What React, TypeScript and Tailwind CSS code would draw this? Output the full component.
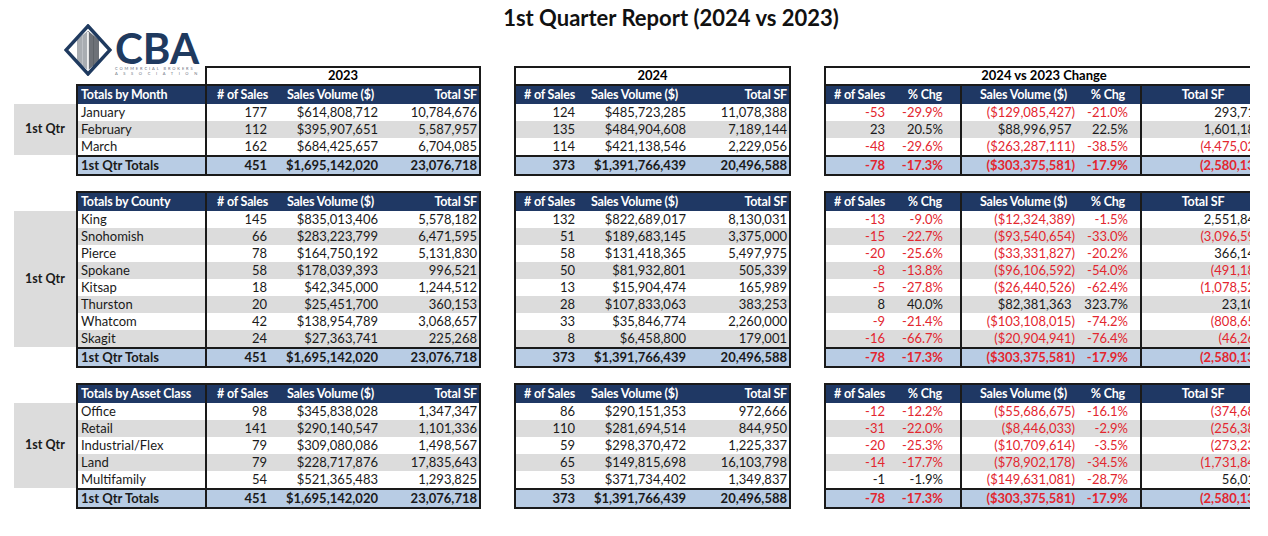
import React from "react";

type Col = { w: string; cls: string; head: string };

const leftCols: Col[] = [
  { w: "w-[129px] border-r-2 border-[#1a1a1a]", cls: "justify-start pl-[3px]", head: "justify-start pl-[3px]" },
  { w: "w-[65px]", cls: "justify-end pr-[5px]", head: "justify-end pr-[4px]" },
  { w: "w-[110px]", cls: "justify-end pr-[4px]", head: "justify-end pr-[8px]" },
  { w: "w-[97px]", cls: "justify-end pr-[2px]", head: "justify-end pr-[2px]" },
];

const midCols: Col[] = [
  { w: "w-[63px]", cls: "justify-end pr-[4px]", head: "justify-end pr-[4px]" },
  { w: "w-[111px]", cls: "justify-end pr-[4px]", head: "justify-center" },
  { w: "w-[99px]", cls: "justify-end pr-[2px]", head: "justify-end pr-[2px]" },
];

const chgCols: Col[] = [
  { w: "w-[63px]", cls: "justify-end pr-[4px]", head: "justify-end pr-[4px]" },
  { w: "w-[73px] border-r-2 border-[#1a1a1a]", cls: "justify-end pr-[17px]", head: "justify-end pr-[18px]" },
  { w: "w-[123px]", cls: "justify-end pr-[10px]", head: "justify-center" },
  { w: "w-[57px] border-r-2 border-[#1a1a1a]", cls: "justify-end pr-[12px]", head: "justify-end pr-[15px]" },
  { w: "w-[128px]", cls: "justify-end pr-[4px]", head: "justify-center pr-[6px]" },
];

type Cell = { t: string; red?: boolean; paren?: boolean };

const RED = "text-[#e3262f]";

function Table({ cols, head, rows, total, width }: { cols: Col[]; head: string[]; rows: Cell[][]; total: Cell[]; width: string }) {
  const renderCell = (c: Cell, i: number, base: string) => (
    <div key={i} className={`${cols[i].w} ${base} h-full flex items-center whitespace-nowrap ${c.red ? RED : ""}`}>
      {c.t}
      {c.paren && <span className="invisible">)</span>}
    </div>
  );
  return (
    <div className={`${width} border-2 border-[#1a1a1a] flex flex-col text-[13px]`}>
      <div className="flex h-[18px] bg-[#1f3864] text-white font-bold text-[12.5px] tracking-[-0.2px]">
        {head.map((h, i) => (
          <div key={i} className={`${cols[i].w} ${cols[i].head} h-full flex items-center whitespace-nowrap`}>
            {h}
          </div>
        ))}
      </div>
      {rows.map((r, ri) => (
        <div key={ri} className={`flex h-[17px] ${ri % 2 === 1 ? "bg-[#dcdcdc]" : "bg-white"} text-[#1a1a1a]`}>
          {r.map((c, i) => renderCell(c, i, cols[i].cls))}
        </div>
      ))}
      <div className="flex h-[19px] border-t-2 border-[#1a1a1a] bg-[#b8cce4] font-bold text-[#1a1a1a]">
        {total.map((c, i) => renderCell(c, i, cols[i].cls))}
      </div>
    </div>
  );
}

const p = (t: string): Cell => ({ t });
// change values: red when negative unless forced black
const ch = (t: string, black = false): Cell => {
  const neg = t.startsWith("-") || t.startsWith("(");
  return { t, red: neg && !black, paren: !t.endsWith(")") && (t.startsWith("$") || /^\d{1,3}(,\d{3})+$/.test(t)) };
};

type Row = { label: string; y23: string[]; y24: string[]; chg: string[]; black?: number[] };

const totalRow: Row = {
  label: "1st Qtr Totals",
  y23: ["451", "$1,695,142,020", "23,076,718"],
  y24: ["373", "$1,391,766,439", "20,496,588"],
  chg: ["-78", "-17.3%", "($303,375,581)", "-17.9%", "(2,580,130)"],
};

const sections: { title: string; rows: Row[] }[] = [
  {
    title: "Totals by Month",
    rows: [
      { label: "January", y23: ["177", "$614,808,712", "10,784,676"], y24: ["124", "$485,723,285", "11,078,388"], chg: ["-53", "-29.9%", "($129,085,427)", "-21.0%", "293,712"] },
      { label: "February", y23: ["112", "$395,907,651", "5,587,957"], y24: ["135", "$484,904,608", "7,189,144"], chg: ["23", "20.5%", "$88,996,957", "22.5%", "1,601,187"] },
      { label: "March", y23: ["162", "$684,425,657", "6,704,085"], y24: ["114", "$421,138,546", "2,229,056"], chg: ["-48", "-29.6%", "($263,287,111)", "-38.5%", "(4,475,029)"] },
    ],
  },
  {
    title: "Totals by County",
    rows: [
      { label: "King", y23: ["145", "$835,013,406", "5,578,182"], y24: ["132", "$822,689,017", "8,130,031"], chg: ["-13", "-9.0%", "($12,324,389)", "-1.5%", "2,551,849"] },
      { label: "Snohomish", y23: ["66", "$283,223,799", "6,471,595"], y24: ["51", "$189,683,145", "3,375,000"], chg: ["-15", "-22.7%", "($93,540,654)", "-33.0%", "(3,096,595)"] },
      { label: "Pierce", y23: ["78", "$164,750,192", "5,131,830"], y24: ["58", "$131,418,365", "5,497,975"], chg: ["-20", "-25.6%", "($33,331,827)", "-20.2%", "366,145"] },
      { label: "Spokane", y23: ["58", "$178,039,393", "996,521"], y24: ["50", "$81,932,801", "505,339"], chg: ["-8", "-13.8%", "($96,106,592)", "-54.0%", "(491,182)"] },
      { label: "Kitsap", y23: ["18", "$42,345,000", "1,244,512"], y24: ["13", "$15,904,474", "165,989"], chg: ["-5", "-27.8%", "($26,440,526)", "-62.4%", "(1,078,523)"] },
      { label: "Thurston", y23: ["20", "$25,451,700", "360,153"], y24: ["28", "$107,833,063", "383,253"], chg: ["8", "40.0%", "$82,381,363", "323.7%", "23,100"] },
      { label: "Whatcom", y23: ["42", "$138,954,789", "3,068,657"], y24: ["33", "$35,846,774", "2,260,000"], chg: ["-9", "-21.4%", "($103,108,015)", "-74.2%", "(808,657)"] },
      { label: "Skagit", y23: ["24", "$27,363,741", "225,268"], y24: ["8", "$6,458,800", "179,001"], chg: ["-16", "-66.7%", "($20,904,941)", "-76.4%", "(46,267)"] },
    ],
  },
  {
    title: "Totals by Asset Class",
    rows: [
      { label: "Office", y23: ["98", "$345,838,028", "1,347,347"], y24: ["86", "$290,151,353", "972,666"], chg: ["-12", "-12.2%", "($55,686,675)", "-16.1%", "(374,681)"] },
      { label: "Retail", y23: ["141", "$290,140,547", "1,101,336"], y24: ["110", "$281,694,514", "844,950"], chg: ["-31", "-22.0%", "($8,446,033)", "-2.9%", "(256,386)"] },
      { label: "Industrial/Flex", y23: ["79", "$309,080,086", "1,498,567"], y24: ["59", "$298,370,472", "1,225,337"], chg: ["-20", "-25.3%", "($10,709,614)", "-3.5%", "(273,230)"] },
      { label: "Land", y23: ["79", "$228,717,876", "17,835,643"], y24: ["65", "$149,815,698", "16,103,798"], chg: ["-14", "-17.7%", "($78,902,178)", "-34.5%", "(1,731,845)"] },
      { label: "Multifamily", y23: ["54", "$521,365,483", "1,293,825"], y24: ["53", "$371,734,402", "1,349,837"], chg: ["-1", "-1.9%", "($149,631,081)", "-28.7%", "56,012"], black: [0, 1] },
    ],
  },
];

function Section({ title, rows, first }: { title: string; rows: Row[]; first?: boolean }) {
  return (
    <div className={`flex pl-[14px] ${first ? "" : "mt-[15px]"}`}>
      <div className="w-[62px] flex flex-col">
        <div className="h-[20px]" />
        <div className="bg-[#dcdcdc] flex items-center justify-center font-bold text-[12.5px] text-[#1a1a1a]" style={{ height: rows.length * 17 }}>
          1st Qtr
        </div>
      </div>
      <Table
        width="w-[405px]"
        cols={leftCols}
        head={[title, "# of Sales", "Sales Volume ($)", "Total SF"]}
        rows={rows.map((r) => [p(r.label), ...r.y23.map(p)])}
        total={[p(totalRow.label), ...totalRow.y23.map(p)]}
      />
      <div className="w-[33px]" />
      <Table
        width="w-[277px]"
        cols={midCols}
        head={["# of Sales", "Sales Volume ($)", "Total SF"]}
        rows={rows.map((r) => r.y24.map(p))}
        total={totalRow.y24.map(p)}
      />
      <div className="w-[33px]" />
      <Table
        width="w-[448px]"
        cols={chgCols}
        head={["# of Sales", "% Chg", "Sales Volume ($)", "% Chg", "Total SF"]}
        rows={rows.map((r) => r.chg.map((t, i) => ch(t, r.black?.includes(i))))}
        total={totalRow.chg.map((t) => ch(t))}
      />
    </div>
  );
}

function Logo() {
  return (
    <div className="flex items-start">
      <svg width="48" height="52" viewBox="0 0 48 52" className="shrink-0">
        <polygon points="13,16 24,7 35,16 35,37 24,46 13,37" fill="#8c9097" />
        <polygon points="13,16 24,7 24,46 13,37" fill="#a9adb2" />
        <polygon points="24,7 35,16 35,37 24,46" fill="#6d7178" />
        <line x1="24" y1="8" x2="24" y2="46" stroke="#ffffff" strokeWidth="1.6" />
        <line x1="18.5" y1="12" x2="18.5" y2="42" stroke="#c4c7cb" strokeWidth="0.8" />
        <line x1="29.5" y1="12" x2="29.5" y2="42" stroke="#5b5f66" strokeWidth="0.8" />
        <polygon points="24,2 46,26 24,50 2,26" fill="none" stroke="#1f3a5f" strokeWidth="3.4" strokeLinejoin="miter" />
      </svg>
      <div className="flex flex-col ml-[3px] mt-[6px]">
        <div className="text-[42px] leading-[36px] font-bold text-[#1f3a5f]">CBA</div>
        <div className="text-[4px] leading-[5px] tracking-[1.9px] text-[#6b7280] whitespace-nowrap">COMMERCIAL BROKERS</div>
        <div className="text-[4px] leading-[5px] tracking-[5.6px] text-[#6b7280] whitespace-nowrap">ASSOCIATION</div>
      </div>
    </div>
  );
}

export default function App() {
  return (
    <div className="w-[1268px] h-[536px] bg-white overflow-hidden font-['Lato',sans-serif] text-[13px]">
      <div className="w-[1250px] overflow-hidden">
        <div className="w-[1300px]">
          <div className="flex h-[66px]">
            <div className="w-[207px] shrink-0" />
            <div className="w-[928px] pt-[4px] text-center text-[22px] font-bold text-[#111] leading-[28px]">
              1st Quarter Report (2024 vs 2023)
            </div>
          </div>
          <div className="flex h-[18px] relative">
            <div className="w-[205px] shrink-0 relative">
              <div className="absolute left-[64px] top-[-42px]">
                <Logo />
              </div>
            </div>
            <div className="w-[276px] border-t-2 border-x-2 border-[#1a1a1a] flex items-center justify-center font-bold text-[13px]">2023</div>
            <div className="w-[33px]" />
            <div className="w-[277px] border-t-2 border-x-2 border-[#1a1a1a] flex items-center justify-center font-bold text-[13px]">2024</div>
            <div className="w-[33px]" />
            <div className="w-[448px] border-t-2 border-x-2 border-[#1a1a1a] flex items-center justify-center font-bold text-[13px] pr-[8px]">2024 vs 2023 Change</div>
          </div>
          {sections.map((s, i) => (
            <Section key={s.title} title={s.title} rows={s.rows} first={i === 0} />
          ))}
        </div>
      </div>
    </div>
  );
}
